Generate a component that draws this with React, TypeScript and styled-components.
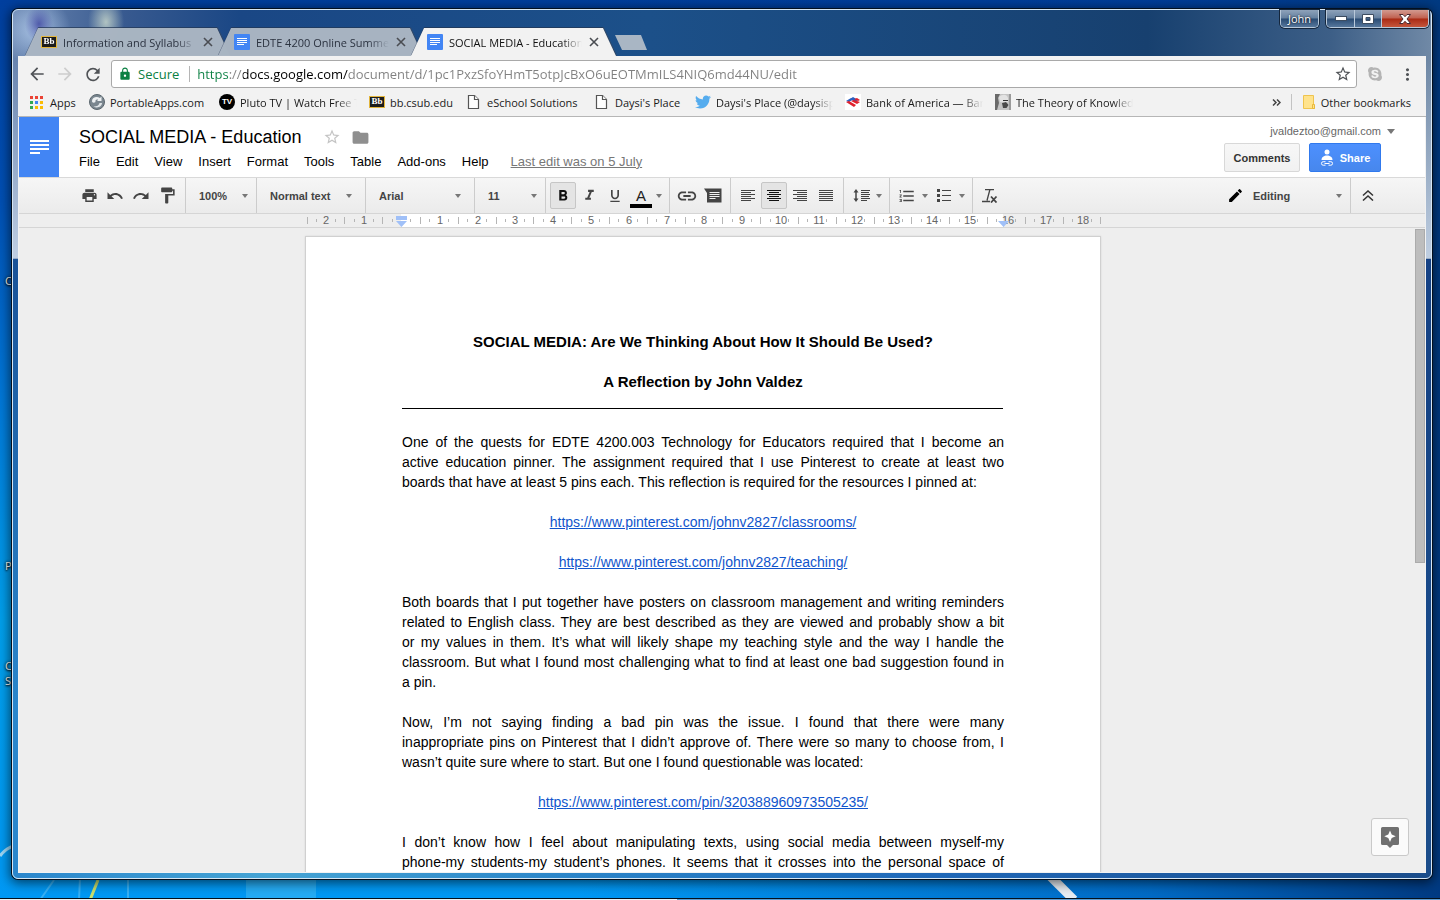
import React from "react";
import styled, { createGlobalStyle, css } from "styled-components";
import {
  MdPrint,
  MdUndo,
  MdRedo,
  MdFormatPaint,
  MdFormatBold,
  MdFormatItalic,
  MdFormatUnderlined,
  MdLink,
  MdFormatListNumbered,
  MdEdit,
  MdLock,
  MdArrowBack,
  MdArrowForward,
  MdRefresh,
  MdMoreVert,
  MdStarBorder,
  MdFolder,
} from "react-icons/md";
import { FaTwitter, FaSkype } from "react-icons/fa";

const ui = `"Open Sans", "Noto Sans", sans-serif`;
const arial = `"Liberation Sans", Arial, sans-serif`;

const GlobalStyle = createGlobalStyle`
  *, *::before, *::after { box-sizing: border-box; }
  body { margin: 0; overflow: hidden; }
  button, select, input { font: inherit; color: inherit; }
  button { background: none; border: 0; padding: 0; cursor: pointer; }
  h1, p { margin: 0; font: inherit; }
`;

/* ---------- Desktop and window frame ---------- */

const Desktop = styled.div`
  position: relative;
  display: flex;
  flex-direction: column;
  height: 100vh;
  padding: 9px 8px 0 12px;
  overflow: hidden;
  font-family: ${ui};
  font-size: 11px;
  background:
    linear-gradient(90deg, rgba(0, 66, 150, 0) 40%, rgba(0, 60, 150, 0.5) 80%, #003a82 100%),
    linear-gradient(180deg, #003f9e 0, #0050b4 200px, #0078d8 400px, #00a0ec 620px, #0098f4 100%);
`;

const Wallpaper = styled.svg`
  position: absolute;
  inset: auto 0 0 0;
  width: 100%;
  height: 100px;
`;

const DesktopLabel = styled.span<{ $top: number }>`
  position: absolute;
  left: 5px;
  top: ${(p) => p.$top}px;
  line-height: 15px;
  color: #fff;
  text-shadow: 0 1px 2px #000, 0 0 3px #000;
`;

const Window = styled.div`
  position: relative;
  flex: 1;
  min-height: 0;
  display: flex;
  flex-direction: column;
  border: 1px solid #d6e6f4;
  border-radius: 6px;
  box-shadow: 0 0 0 1px #04101f, 0 2px 12px 2px rgba(0, 0, 0, 0.6);
  background:
    radial-gradient(14px 18px at 26px 14px, rgba(62, 70, 160, 0.8), transparent),
    radial-gradient(36px 34px at 22px 20px, rgba(190, 215, 245, 0.75), transparent),
    radial-gradient(18px 26px at 93px 12px, rgba(205, 220, 205, 0.8), transparent),
    linear-gradient(180deg, rgba(190, 205, 225, 0) 50px, rgba(200, 214, 232, 0.9) 248px, transparent 249px),
    linear-gradient(90deg, #6985b0 0, #37598f 8%, #1a4785 16%, #1c5089 45%, #17406f 80%, #3d5f87 93%, #7089a6 100%) top / 100% 249px no-repeat,
    linear-gradient(180deg, rgba(18, 60, 130, 0.7) 249px, rgba(18, 70, 150, 0) 700px),
    linear-gradient(90deg, #2a86cc 0, #46a4d4 18%, #2b84c8 40%, #2068b8 65%, #1a4c8a 100%);
`;

const Taskbar = styled.div`
  position: relative;
  height: 2px;
  margin: 19px -8px 0 -12px;
  border-top: 1px solid #02101c;
  background: linear-gradient(90deg, #e8f2f6 0 47%, #5f9ccf 47% 100%);
`;

const TitleBar = styled.header`
  display: flex;
  align-items: flex-end;
  height: 46px;
  padding: 0 2px 0 12px;
`;

const TabOutline = styled.div<{ $active?: boolean }>`
  position: relative;
  z-index: ${(p) => (p.$active ? 2 : 0)};
  width: 205px;
  margin-right: -12px;
  filter: drop-shadow(0 -1px 0 rgba(30, 50, 80, 0.6)) drop-shadow(1px 0 0 rgba(60, 75, 95, 0.6));
`;

const TabShape = styled.div<{ $active?: boolean }>`
  display: flex;
  align-items: center;
  height: 28px;
  padding: 0 17px 0 16px;
  background: ${(p) => (p.$active ? "#f2f2f2" : "rgba(176, 186, 199, 0.95)")};
  clip-path: polygon(13px 0, calc(100% - 13px) 0, 100% 100%, 0 100%);
`;

const fade = css`
  overflow: hidden;
  white-space: nowrap;
  mask-image: linear-gradient(90deg, #000 calc(100% - 20px), transparent);
`;

const TabTitle = styled.button<{ $active?: boolean }>`
  flex: 1;
  margin-left: 6px;
  text-align: left;
  color: ${(p) => (p.$active ? "#111" : "#2b3340")};
  ${fade}
`;

const TabClose = styled.button`
  display: flex;
  margin-left: 7px;
  color: #4a4d52;
`;

const NewTab = styled.button`
  width: 32px;
  height: 15px;
  margin: 0 0 6px 11px;
  background: #a9b6c4;
  clip-path: polygon(0 0, 26px 0, 100% 100%, 7px 100%);
`;

const Caption = styled.div`
  display: flex;
  align-self: flex-start;
  gap: 7px;
  margin-left: auto;
`;

const CaptionGroup = styled.div`
  display: flex;
  border: 1px solid #b9c9da;
  border-top: 0;
  border-radius: 0 0 5px 5px;
  box-shadow: 0 0 0 1px #14263c;
  overflow: hidden;
`;

const CaptionButton = styled.button<{ $close?: boolean; $wide?: boolean }>`
  display: flex;
  align-items: center;
  justify-content: center;
  width: ${(p) => (p.$close ? 47 : p.$wide ? 37 : 27)}px;
  height: 17px;
  line-height: 17px;
  font-size: 11px;
  color: #fff;
  text-shadow: 0 0 2px #000;
  background: ${(p) =>
    p.$close
      ? "linear-gradient(#d29a90 0, #c0604f 48%, #a92a14 52%, #c4563c 100%)"
      : "linear-gradient(#8ea2ba 0, #65809f 48%, #294a72 52%, #56779c 100%)"};
  & + & {
    border-left: 1px solid #b9c9da;
  }
`;

const Client = styled.div`
  flex: 1;
  min-height: 0;
  display: flex;
  flex-direction: column;
  margin: 0 5px 5px;
  background: #f2f2f2;
`;

/* ---------- Browser toolbars ---------- */

const NavBar = styled.nav`
  display: flex;
  align-items: center;
  height: 32px;
  padding: 4px 9px 0 9px;
  color: #505357;
`;

const NavButton = styled.button<{ $gap?: number }>`
  display: flex;
  align-items: center;
  justify-content: center;
  width: 20px;
  margin-right: ${(p) => p.$gap ?? 8}px;
  &:disabled {
    color: #cdcdcd;
  }
`;

const Omnibox = styled.form`
  flex: 1;
  display: flex;
  align-items: center;
  height: 28px;
  padding: 0 4px 0 6px;
  margin-right: 8px;
  border: 1px solid #a9a9a9;
  border-radius: 3px;
  background: #fff;
  font-size: 13px;
`;

const Secure = styled.span`
  display: flex;
  align-items: center;
  gap: 6px;
  padding-right: 10px;
  margin-right: 7px;
  border-right: 1px solid #b5b5b5;
  line-height: 16px;
  color: #0b8043;
`;

const Url = styled.input`
  flex: 1;
  min-width: 0;
  height: 24px;
  padding: 0;
  border: 0;
  outline: 0;
  color: transparent;
  background: linear-gradient(90deg, #0b8043 0 32px, #808080 32px 46px, #000 46px 151px, #808080 151px);
  background-clip: text;
`;

const Bookmarks = styled.div`
  display: flex;
  align-items: center;
  gap: 12px;
  height: 29px;
  padding: 0 15px 0 11px;
  border-bottom: 1px solid #b6b6b6;
  color: #1a1a1a;
`;

const Bookmark = styled.a`
  display: flex;
  align-items: center;
  gap: 5px;
  color: inherit;
  text-decoration: none;
  white-space: nowrap;
`;

const BookmarkLabel = styled.span<{ $width?: number; $fade?: boolean }>`
  width: ${(p) => (p.$width ? `${p.$width}px` : "auto")};
  white-space: nowrap;
  ${(p) => p.$fade && fade}
`;

const BookmarkEnd = styled.div`
  display: flex;
  align-items: center;
  gap: 10px;
  margin-left: auto;
`;

const Divider = styled.span`
  width: 1px;
  height: 16px;
  background: #c3c3c3;
`;

const BbIcon = styled.span`
  width: 16px;
  height: 12px;
  border: 1px solid #e2b53c;
  background: #1c1c1c;
  color: #fff;
  font: bold 9px/9px "Liberation Serif", serif;
  text-align: center;
`;

const TvIcon = styled.span`
  width: 16px;
  height: 16px;
  border-radius: 50%;
  background: #000;
  color: #fff;
  font: bold 8px/16px ${arial};
  text-align: center;
`;

/* ---------- Document editor ---------- */

const Docs = styled.main`
  position: relative;
  flex: 1;
  min-height: 0;
  display: flex;
  flex-direction: column;
  margin: 0 1px 1px;
  background: #eee;
  font-family: ${arial};
`;

const DocsHeader = styled.header`
  display: flex;
  height: 60px;
  background: #fff;
`;

const Logo = styled.a`
  display: flex;
  align-items: center;
  justify-content: center;
  width: 40px;
  background: #4285f4;
`;

const TitleArea = styled.div`
  flex: 1;
  padding: 8px 0 0 20px;
`;

const TitleRow = styled.div`
  display: flex;
  align-items: center;
  height: 24px;
  color: #8f8f8f;
`;

const DocTitle = styled.h1`
  margin-right: 22px;
  font-size: 18px;
  line-height: 24px;
  color: #000;
`;

const IconButton = styled.button`
  display: flex;
  margin-right: 10px;
`;

const MenuRow = styled.nav`
  display: flex;
  align-items: center;
  gap: 16px;
  height: 24px;
  font-size: 13px;
  color: #000;
`;

const LastEdit = styled.a`
  margin-left: 6px;
  color: #777;
`;

const Account = styled.div`
  display: flex;
  flex-direction: column;
  align-items: flex-end;
  gap: 4px;
  padding-top: 6px;
  font-size: 11px;
`;

const Email = styled.button`
  display: flex;
  align-items: center;
  gap: 6px;
  height: 16px;
  margin-right: 30px;
  color: #666;
`;

const Actions = styled.div`
  display: flex;
  gap: 9px;
  margin-right: 44px;
`;

const ActionButton = styled.button<{ $primary?: boolean }>`
  display: flex;
  align-items: center;
  justify-content: center;
  gap: 6px;
  height: 29px;
  min-width: ${(p) => (p.$primary ? 72 : 76)}px;
  border: 1px solid ${(p) => (p.$primary ? "#3079ed" : "#d8d8d8")};
  border-radius: 2px;
  font-weight: bold;
  color: ${(p) => (p.$primary ? "#fff" : "#333")};
  background: ${(p) =>
    p.$primary ? "linear-gradient(#4d90fe, #4787ed)" : "linear-gradient(#f7f7f7, #f1f1f1)"};
`;

const Toolbar = styled.div`
  display: flex;
  height: 37px;
  border-top: 1px solid #d9d9d9;
  border-bottom: 1px solid #d5d5d5;
  background: linear-gradient(#f6f6f6, #ebebeb);
  font-size: 11px;
  color: #444;
`;

const Group = styled.div<{ $lead?: boolean; $end?: boolean }>`
  display: flex;
  align-items: center;
  padding: 0 ${(p) => (p.$lead ? 5 : 4)}px 0 ${(p) => (p.$lead ? 57 : 4)}px;
  border-right: ${(p) => (p.$end ? 0 : "1px solid #ccc")};
`;

const CollapseGroup = styled(Group)`
  padding-right: 44px;
`;

const ToolButton = styled.button<{ $on?: boolean }>`
  display: flex;
  align-items: center;
  justify-content: center;
  width: 26px;
  height: 27px;
  border: 1px solid ${(p) => (p.$on ? "#c6c6c6" : "transparent")};
  border-radius: 2px;
  background: ${(p) => (p.$on ? "#e4e4e4" : "none")};
  color: ${(p) => (p.$on ? "#111" : "#444")};
`;

const CaretButton = styled.button`
  display: flex;
  margin: 0 3px 0 2px;
`;

const SelectBox = styled.label<{ $width: number; $inset?: number }>`
  position: relative;
  display: flex;
  align-items: center;
  width: ${(p) => p.$width}px;
  border-right: 1px solid #ccc;
  & > svg:last-child {
    position: absolute;
    right: ${(p) => p.$inset ?? 8}px;
    pointer-events: none;
  }
`;

const ModeBox = styled(SelectBox)`
  margin-left: auto;
`;

const Select = styled.select`
  appearance: none;
  flex: 1;
  min-width: 0;
  height: 27px;
  padding: 0 20px 0 13px;
  border: 0;
  background: none;
  font-weight: bold;
  color: #444;
`;

const ModeSelect = styled(Select)`
  padding-left: 9px;
`;

const TextColor = styled.span`
  display: flex;
  flex-direction: column;
  align-items: center;
  width: 22px;
  margin-top: 4px;
  border-bottom: 4px solid #000;
  font-size: 15px;
  line-height: 17px;
  color: #222;
`;

const RulerRow = styled.div`
  display: flex;
  justify-content: center;
  height: 14px;
  padding-right: 38px;
  border-bottom: 1px solid #d5d5d5;
`;

const Scroller = styled.div`
  flex: 1;
  min-height: 0;
  display: flex;
`;

const Canvas = styled.div`
  flex: 1;
  display: flex;
  justify-content: center;
  padding: 8px 28px 0 0;
  overflow: hidden;
`;

const ScrollTrack = styled.div`
  width: 10px;
  padding: 1px 0;
`;

const ScrollThumb = styled.div`
  height: 52%;
  border: 1px solid #ababab;
  background: #bdbdbd;
`;

const Page = styled.article`
  width: 796px;
  height: 1100px;
  padding: 95px 96px;
  border: 1px solid #d0d0d0;
  background: #fff;
  box-shadow: 0 0 2px rgba(0, 0, 0, 0.1);
  font-size: 14px;
  line-height: 20px;
  color: #000;
`;

const Heading = styled.h1`
  margin-bottom: 20px;
  font-size: 15px;
  font-weight: bold;
  text-align: center;
`;

const Rule = styled.hr`
  height: 1px;
  margin: -4px 1px 23px 0;
  border: 0;
  background: #000;
`;

const Paragraph = styled.p<{ $center?: boolean }>`
  margin-bottom: 20px;
  text-align: ${(p) => (p.$center ? "center" : "justify")};
`;

const Line = styled.span<{ $last?: boolean }>`
  display: block;
  white-space: nowrap;
  text-align-last: ${(p) => (p.$last ? "left" : "justify")};
`;

const DocLink = styled.a`
  color: #1155cc;
`;

const Explore = styled.button`
  position: absolute;
  right: 16px;
  bottom: 16px;
  display: flex;
  align-items: center;
  justify-content: center;
  width: 38px;
  height: 38px;
  border: 1px solid #c9c9c9;
  border-radius: 3px;
  background: #fafafa;
`;

/* ---------- Icons ---------- */

const Caret = ({ size = 6 }: { size?: number }) => (
  <svg width={size} height={size / 2 + 1} viewBox="0 0 8 4" fill="#777" preserveAspectRatio="none">
    <path d="M0 0h8L4 4z" />
  </svg>
);

const DocIcon = () => (
  <svg width="16" height="16" viewBox="0 0 16 16">
    <rect width="16" height="16" rx="1" fill="#4285f4" />
    <path d="M3 4.5h10M3 6.5h10M3 8.5h10M3 10.5h7" stroke="#fff" />
  </svg>
);

const CloseIcon = () => (
  <svg width="10" height="10" viewBox="0 0 10 10" stroke="currentColor" strokeWidth="1.6">
    <path d="M1 1l8 8M9 1L1 9" />
  </svg>
);

const FileIcon = () => (
  <svg width="16" height="16" viewBox="0 0 16 16" fill="#fff" stroke="#555" strokeWidth="1.2">
    <path d="M2.5 1.5h6l4 4v9h-10z" />
    <path d="M8.5 1.5v4h4" />
  </svg>
);

const AppsIcon = () => {
  const colors = ["#ea4335", "#ea4335", "#ea4335", "#34a853", "#4285f4", "#fbbc05", "#34a853", "#fbbc05", "#fbbc05"];
  return (
    <svg width="16" height="16" viewBox="0 0 16 16" shapeRendering="crispEdges">
      {colors.map((c, i) => (
        <rect key={i} x={1 + (i % 3) * 5} y={2 + Math.floor(i / 3) * 5} width="3" height="3" fill={c} />
      ))}
    </svg>
  );
};

const PortableIcon = () => (
  <svg width="16" height="16" viewBox="0 0 16 16">
    <circle cx="8" cy="8" r="7.5" fill="#7b8790" stroke="#5b666e" />
    <path d="M3 7c0-4 5-5 8-3l1.500-1.500V7H8l1.200-1.200C7.500 5 6 6 6.500 8 5 9 3 9 3 7z" fill="#eef1f3" />
    <path d="M13 9c0 4-5 5.500-8.500 3.500C8 12.500 10 11.500 10.500 9z" fill="#dfe4e7" />
  </svg>
);

const BankIcon = () => (
  <svg width="16" height="16" viewBox="0 0 16 16">
    <rect width="16" height="16" fill="#fff" />
    <path d="M1 7l5-3 3 1-5 3zM5 5l3-2 5 3-3 2z" fill="#2a5fc0" />
    <path d="M1 8l3-1 7 4-2 2zM6 7l3-1 6 2-3 2zM9 5l3-1 3 2-2 1z" fill="#e0202c" />
  </svg>
);

const PortraitIcon = () => (
  <svg width="16" height="16" viewBox="0 0 16 16">
    <rect width="16" height="16" fill="#c4c4c4" />
    <path d="M0 0h5L3 4l1 5-2 7H0z" fill="#6a6a6a" />
    <path d="M4 3c3-3 8-3 9 1v4l-3 1-5-1z" fill="#e2e2e2" />
    <path d="M7 9l4-1 2.500 3-2 3H8z" fill="#4a4a4a" />
    <path d="M8 6h5v1H8z" fill="#333" />
    <path d="M14 0h2v16h-2z" fill="#9a9a9a" />
  </svg>
);

const BookmarkFolder = () => (
  <svg width="14" height="14" viewBox="0 0 14 14">
    <path d="M1.500.5h10v9l1 1v3h-11z" fill="#ffe38c" stroke="#efc44e" />
    <path d="M10.500 9.500h2v4h-2z" fill="#ffe38c" stroke="#e9b93a" />
  </svg>
);

const AlignIcon = ({ kind }: { kind: "left" | "center" | "right" | "full" }) => (
  <svg width="14" height="11" viewBox="0 0 14 11" fill="currentColor" shapeRendering="crispEdges">
    {[0, 1, 2, 3, 4, 5].map((i) => {
      const w = kind === "full" || i % 2 === 0 ? 14 : 10;
      const x = kind === "center" ? (14 - w) / 2 : kind === "right" ? 14 - w : 0;
      return <rect key={i} x={x} y={i * 2} width={w} height="1" />;
    })}
  </svg>
);

const CommentIcon = () => (
  <svg width="18" height="15" viewBox="0 0 18 15">
    <path d="M0 .5h17.500v14H3V5z" fill="#444" />
    <path d="M5.500 4.500h10M5.500 6.500h10M5.500 8.500h10M5.500 10.500h6" stroke="#f1f1f1" />
  </svg>
);

const SpacingIcon = () => (
  <svg width="17" height="13" viewBox="0 0 17 13" stroke="#444" fill="#444">
    <path d="M3 2v9" strokeWidth="1.500" />
    <path d="M3 0l2.500 3.500h-5zM3 13l2.500-3.500h-5z" stroke="none" />
    <path d="M8 1.500h9M8 3.500h8M8 5.500h9M8 7.500h8M8 9.500h9M8 11.500h6" />
  </svg>
);

const BulletIcon = () => (
  <svg width="14" height="13" viewBox="0 0 14 13" fill="#444" shapeRendering="crispEdges">
    <path d="M0 0h3v3H0zM0 5h3v3H0zM0 10h3v3H0zM5 1h9v1H5zM5 6h9v1H5zM5 11h9v1H5z" />
  </svg>
);

const ClearIcon = () => (
  <svg width="16" height="14" viewBox="0 0 16 14" fill="none" stroke="#444">
    <path d="M3 .5h9M7.800 1L5 11.500M0 12.500h8" strokeWidth="1.300" />
    <path d="M9 7.500l5.500 6M14.500 7.500l-5.500 6" strokeWidth="1.800" />
  </svg>
);

const ShareIcon = () => (
  <svg width="14" height="18" viewBox="0 0 14 18" fill="#fff">
    <circle cx="7" cy="3" r="2.500" />
    <path d="M1.500 11c0-3 2.500-4.500 5.500-4.500s5.500 1.500 5.500 4.500z" />
    <path d="M5.500 12.700H3.200a1.700 1.700 0 0 0 0 3.500h2.300M8.500 12.700h2.300a1.700 1.700 0 0 1 0 3.500H8.500M4.500 14.500h5" fill="none" stroke="#fff" />
  </svg>
);

const ChevronsIcon = () => (
  <svg width="12" height="11" viewBox="0 0 12 11" fill="none" stroke="#333" strokeWidth="1.500">
    <path d="M1 5.500L6 1l5 4.500M1 10.500L6 6l5 4.500" />
  </svg>
);

const ExploreIcon = () => (
  <svg width="18" height="21" viewBox="0 0 18 21">
    <path d="M1.500 0h15Q18 0 18 1.500v15q0 1.500-1.500 1.500H12l-3 3-3-3H1.500Q0 18 0 16.500v-15Q0 0 1.500 0z" fill="#6f6f6f" />
    <path d="M9 3.500l1.700 4 4 1.700-4 1.700-1.700 4-1.700-4-4-1.700 4-1.700z" fill="#fff" />
  </svg>
);

const Ruler = () => {
  const cm = 37.8;
  const origin = 96;
  const ticks = [];
  for (let q = -10; q <= 74; q++) {
    const x = Math.round(origin + (q * cm) / 4);
    if (x < 0 || x > 796) continue;
    if (q % 4 === 0) {
      if (q !== 0)
        ticks.push(
          <text key={q} x={q > 39 ? x + 2 : x + 1} y="10" textAnchor="middle">
            {Math.abs(q / 4)}
          </text>
        );
    } else {
      const tall = q % 2 === 0;
      ticks.push(<rect key={q} x={x} y={tall ? 3 : 5} width="1" height={tall ? 7 : 3} fill="#b5b5b5" />);
    }
  }
  return (
    <svg width="797" height="13" viewBox="0 0 797 13" fontSize="11" fill="#666" fontFamily="Liberation Sans">
      <rect x={origin} width="602" height="13" fill="#fff" />
      {ticks}
      <path d="M91 2h11v4H91zM91 7h11l-5.500 6zM693 7h11l-5.500 6z" fill="#a0c0f8" />
    </svg>
  );
};

/* ---------- Data ---------- */

const tabs = [
  { title: "Information and Syllabus", icon: <BbIcon>Bb</BbIcon> },
  { title: "EDTE 4200 Online Summer", icon: <DocIcon /> },
  { title: "SOCIAL MEDIA - Education", icon: <DocIcon />, active: true },
];

const bookmarks = [
  { label: "Apps", icon: <AppsIcon />, width: 27 },
  { label: "PortableApps.com", icon: <PortableIcon />, width: 97 },
  { label: "Pluto TV | Watch Free TV", icon: <TvIcon>TV</TvIcon>, width: 117, fade: true },
  { label: "bb.csub.edu", icon: <BbIcon>Bb</BbIcon>, width: 64 },
  { label: "eSchool Solutions", icon: <FileIcon />, width: 95 },
  { label: "Daysi's Place", icon: <FileIcon />, width: 68 },
  { label: "Daysi's Place (@daysisplace)", icon: <FaTwitter size={16} color="#55acee" />, width: 117, fade: true },
  { label: "Bank of America — Banking", icon: <BankIcon />, width: 117, fade: true },
  { label: "The Theory of Knowledge", icon: <PortraitIcon />, width: 117, fade: true },
];

const menus = ["File", "Edit", "View", "Insert", "Format", "Tools", "Table", "Add-ons", "Help"];

type Block = { link: string } | { lines: string[]; open?: boolean };

const blocks: Block[] = [
  {
    lines: [
      "One of the quests for EDTE 4200.003 Technology for Educators required that I become an",
      "active education pinner. The assignment required that I use Pinterest to create at least two",
      "boards that have at least 5 pins each. This reflection is required for the resources I pinned at:",
    ],
  },
  { link: "https://www.pinterest.com/johnv2827/classrooms/" },
  { link: "https://www.pinterest.com/johnv2827/teaching/" },
  {
    lines: [
      "Both boards that I put together have posters on classroom management and writing reminders",
      "related to English class. They are best described as they are viewed and probably show a bit",
      "or my values in them. It’s what will likely shape my teaching style and the way I handle the",
      "classroom. But what I found most challenging what to find at least one bad suggestion found in",
      "a pin.",
    ],
  },
  {
    lines: [
      "Now, I’m not saying finding a bad pin was the issue. I found that there were many",
      "inappropriate pins on Pinterest that I didn’t approve of. There were so many to choose from, I",
      "wasn’t quite sure where to start. But one I found questionable was located:",
    ],
  },
  { link: "https://www.pinterest.com/pin/320388960973505235/" },
  {
    open: true,
    lines: [
      "I don’t know how I feel about manipulating texts, using social media between myself-my",
      "phone-my students-my student’s phones. It seems that it crosses into the personal space of",
    ],
  },
];

type PickerProps = { label: string; value: string; width: number; inset?: number };

const Picker = ({ label, value, width, inset }: PickerProps) => (
  <SelectBox $width={width} $inset={inset}>
    <Select aria-label={label} defaultValue={value}>
      <option>{value}</option>
    </Select>
    <Caret />
  </SelectBox>
);

/* ---------- App ---------- */

export default function App() {
  return (
    <>
      <GlobalStyle />
      <Desktop>
        <Wallpaper viewBox="0 0 1440 100" preserveAspectRatio="none" fill="none" aria-hidden="true">
          <path d="M0 56Q6 48 14 46" stroke="#9fd8f6" strokeWidth="3" />
          <path d="M54 80L40 100M80 78L79 100M128 78V100" stroke="#5bc0f5" strokeOpacity=".6" strokeWidth="2" />
          <path d="M98 80L90 100" stroke="#c8e070" strokeWidth="3" />
          <path d="M246 79h70v21h-70z" fill="#5cc8f5" fillOpacity=".4" />
          <path d="M1050 76L1074 100" stroke="#e6ecf2" strokeWidth="9" />
        </Wallpaper>
        <DesktopLabel $top={273}>C</DesktopLabel>
        <DesktopLabel $top={558}>P</DesktopLabel>
        <DesktopLabel $top={658}>C</DesktopLabel>
        <DesktopLabel $top={673}>S</DesktopLabel>

        <Window>
          <TitleBar>
            {tabs.map((t) => (
              <TabOutline key={t.title} $active={t.active}>
                <TabShape $active={t.active}>
                  {t.icon}
                  <TabTitle $active={t.active}>{t.title}</TabTitle>
                  <TabClose aria-label="Close tab">
                    <CloseIcon />
                  </TabClose>
                </TabShape>
              </TabOutline>
            ))}
            <NewTab aria-label="New tab" />
            <Caption>
              <CaptionGroup>
                <CaptionButton $wide>John</CaptionButton>
              </CaptionGroup>
              <CaptionGroup>
                <CaptionButton aria-label="Minimize">
                  <svg width="12" height="5" viewBox="0 0 12 5">
                    <rect x=".5" y=".5" width="11" height="4" fill="#fff" stroke="#3c4c60" />
                  </svg>
                </CaptionButton>
                <CaptionButton aria-label="Restore">
                  <svg width="12" height="10" viewBox="0 0 12 10">
                    <path d="M.5.500h11v9H.5zM4 3.500v3h4v-3z" fill="#fff" fillRule="evenodd" stroke="#3c4c60" />
                  </svg>
                </CaptionButton>
                <CaptionButton $close aria-label="Close">
                  <svg width="12" height="10" viewBox="0 0 12 10">
                    <path d="M.5.500h3.500L6 2.700 8 .5h3.500L8 5l3.500 4.500H8L6 7.300 4 9.500H.5L4 5z" fill="#fff" stroke="#4a2a30" />
                  </svg>
                </CaptionButton>
              </CaptionGroup>
            </Caption>
          </TitleBar>

          <Client>
            <NavBar>
              <NavButton aria-label="Back">
                <MdArrowBack size={20} />
              </NavButton>
              <NavButton aria-label="Forward" disabled>
                <MdArrowForward size={20} />
              </NavButton>
              <NavButton aria-label="Reload">
                <MdRefresh size={21} />
              </NavButton>
              <Omnibox onSubmit={(e) => e.preventDefault()}>
                <Secure>
                  <MdLock size={14} />
                  Secure
                </Secure>
                <Url
                  aria-label="Address"
                  defaultValue="https://docs.google.com/document/d/1pc1PxzSfoYHmT5otpJcBxO6uEOTMmILS4NIQ6md44NU/edit"
                />
                <MdStarBorder size={18} />
              </Omnibox>
              <NavButton aria-label="Skype" $gap={12}>
                <FaSkype size={16} color="#b4b4b4" />
              </NavButton>
              <NavButton aria-label="Menu" $gap={0}>
                <MdMoreVert size={19} />
              </NavButton>
            </NavBar>

            <Bookmarks>
              {bookmarks.map((b) => (
                <Bookmark key={b.label} href="#">
                  {b.icon}
                  <BookmarkLabel $width={b.width} $fade={b.fade}>
                    {b.label}
                  </BookmarkLabel>
                </Bookmark>
              ))}
              <BookmarkEnd>
                <NavButton as="button" aria-label="More bookmarks" $gap={-6}>
                  <svg width="9" height="7" viewBox="0 0 9 7" fill="none" stroke="#444" strokeWidth="1.500">
                    <path d="M1 .5l3 3-3 3M5 .5l3 3-3 3" />
                  </svg>
                </NavButton>
                <Divider />
                <Bookmark href="#">
                  <BookmarkFolder />
                  Other bookmarks
                </Bookmark>
              </BookmarkEnd>
            </Bookmarks>

            <Docs>
              <DocsHeader>
                <Logo href="#" aria-label="Docs home">
                  <svg width="19" height="14" viewBox="0 0 19 14" fill="#fff" shapeRendering="crispEdges">
                    <path d="M0 0h19v2H0zM0 4h19v2H0zM0 8h19v2H0zM0 12h10v2H0z" />
                  </svg>
                </Logo>
                <TitleArea>
                  <TitleRow>
                    <DocTitle>SOCIAL MEDIA - Education</DocTitle>
                    <IconButton aria-label="Star">
                      <MdStarBorder size={18} color="#c4c4c4" />
                    </IconButton>
                    <IconButton aria-label="Move to folder">
                      <MdFolder size={19} />
                    </IconButton>
                  </TitleRow>
                  <MenuRow>
                    {menus.map((m) => (
                      <button key={m}>{m}</button>
                    ))}
                    <LastEdit href="#">Last edit was on 5 July</LastEdit>
                  </MenuRow>
                </TitleArea>
                <Account>
                  <Email>
                    jvaldeztoo@gmail.com
                    <Caret size={8} />
                  </Email>
                  <Actions>
                    <ActionButton>Comments</ActionButton>
                    <ActionButton $primary>
                      <ShareIcon />
                      Share
                    </ActionButton>
                  </Actions>
                </Account>
              </DocsHeader>

              <Toolbar>
                <Group $lead>
                  <ToolButton aria-label="Print"><MdPrint size={17} /></ToolButton>
                  <ToolButton aria-label="Undo"><MdUndo size={18} /></ToolButton>
                  <ToolButton aria-label="Redo"><MdRedo size={18} /></ToolButton>
                  <ToolButton aria-label="Paint format"><MdFormatPaint size={19} /></ToolButton>
                </Group>
                <Picker label="Zoom" value="100%" width={71} />
                <Picker label="Style" value="Normal text" width={109} inset={13} />
                <Picker label="Font" value="Arial" width={109} inset={13} />
                <Picker label="Font size" value="11" width={71} />
                <Group>
                  <ToolButton $on aria-label="Bold"><MdFormatBold size={18} /></ToolButton>
                  <ToolButton aria-label="Italic"><MdFormatItalic size={17} /></ToolButton>
                  <ToolButton aria-label="Underline"><MdFormatUnderlined size={16} /></ToolButton>
                  <ToolButton aria-label="Text color"><TextColor>A</TextColor></ToolButton>
                  <CaretButton aria-label="More colors"><Caret /></CaretButton>
                </Group>
                <Group>
                  <ToolButton aria-label="Insert link"><MdLink size={22} /></ToolButton>
                  <ToolButton aria-label="Add comment"><CommentIcon /></ToolButton>
                </Group>
                <Group>
                  <ToolButton aria-label="Align left"><AlignIcon kind="left" /></ToolButton>
                  <ToolButton $on aria-label="Align center"><AlignIcon kind="center" /></ToolButton>
                  <ToolButton aria-label="Align right"><AlignIcon kind="right" /></ToolButton>
                  <ToolButton aria-label="Justify"><AlignIcon kind="full" /></ToolButton>
                </Group>
                <Group>
                  <ToolButton aria-label="Line spacing"><SpacingIcon /></ToolButton>
                  <CaretButton aria-label="Spacing options"><Caret /></CaretButton>
                </Group>
                <Group>
                  <ToolButton aria-label="Numbered list"><MdFormatListNumbered size={18} /></ToolButton>
                  <CaretButton aria-label="Numbering options"><Caret /></CaretButton>
                  <ToolButton aria-label="Bulleted list"><BulletIcon /></ToolButton>
                  <CaretButton aria-label="Bullet options"><Caret /></CaretButton>
                </Group>
                <Group $end>
                  <ToolButton aria-label="Clear formatting"><ClearIcon /></ToolButton>
                </Group>
                <ModeBox $width={124}>
                  <MdEdit size={17} color="#000" />
                  <ModeSelect aria-label="Mode" defaultValue="Editing">
                    <option>Editing</option>
                  </ModeSelect>
                  <Caret />
                </ModeBox>
                <CollapseGroup $end>
                  <ToolButton aria-label="Hide menus"><ChevronsIcon /></ToolButton>
                </CollapseGroup>
              </Toolbar>

              <RulerRow>
                <Ruler />
              </RulerRow>

              <Scroller>
                <Canvas>
                  <Page>
                    <Heading>SOCIAL MEDIA: Are We Thinking About How It Should Be Used?</Heading>
                    <Heading>A Reflection by John Valdez</Heading>
                    <Rule />
                    {blocks.map((b, i) =>
                      "link" in b ? (
                        <Paragraph key={i} $center>
                          <DocLink href={b.link}>{b.link}</DocLink>
                        </Paragraph>
                      ) : (
                        <Paragraph key={i}>
                          {b.lines.map((l, n) => (
                            <Line key={n} $last={!b.open && n === b.lines.length - 1}>
                              {l}
                            </Line>
                          ))}
                        </Paragraph>
                      )
                    )}
                  </Page>
                </Canvas>
                <ScrollTrack>
                  <ScrollThumb />
                </ScrollTrack>
              </Scroller>

              <Explore aria-label="Explore">
                <ExploreIcon />
              </Explore>
            </Docs>
          </Client>
        </Window>
        <Taskbar />
      </Desktop>
    </>
  );
}
